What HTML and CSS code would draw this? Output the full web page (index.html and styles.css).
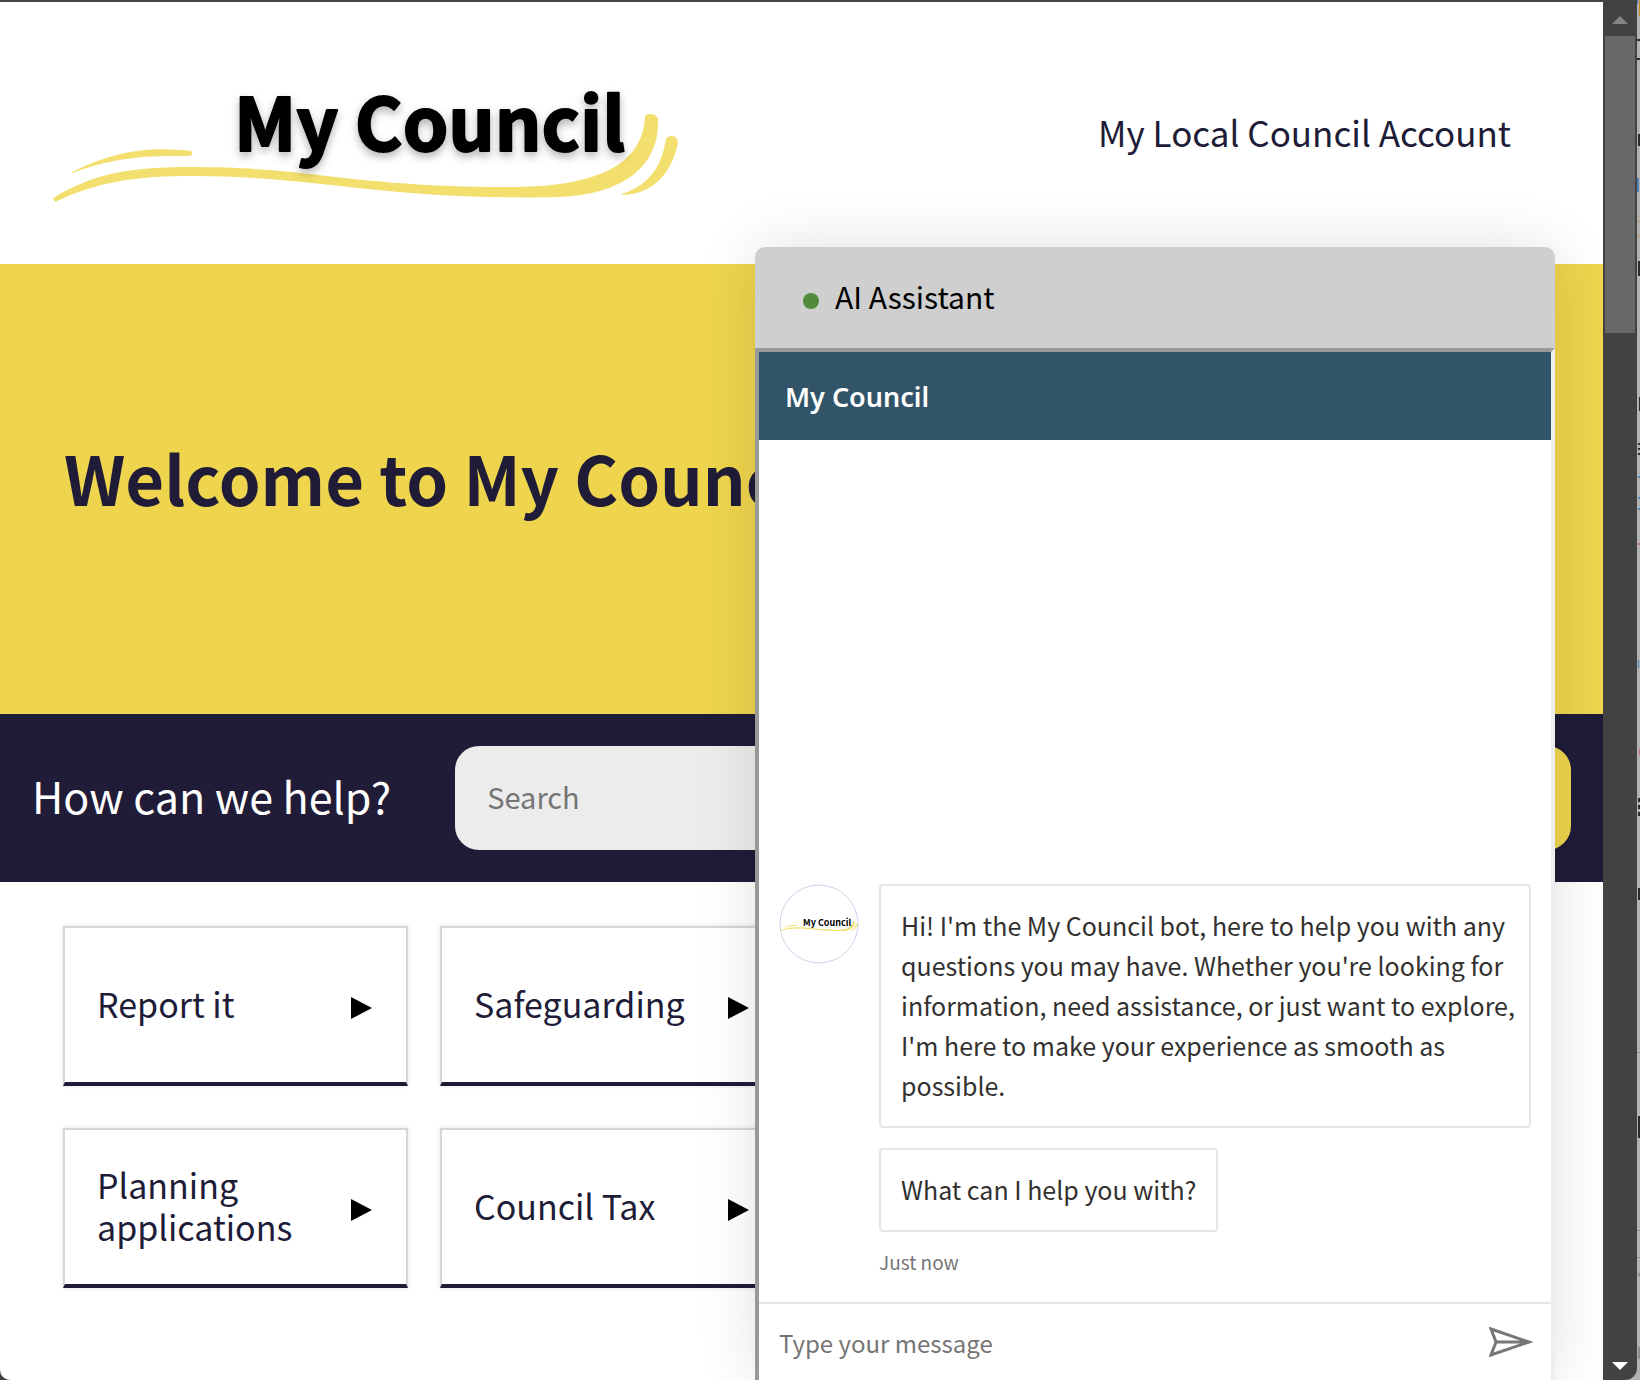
FILE: index.html
```html
<!DOCTYPE html>
<html lang="en">
<head>
<meta charset="utf-8">
<meta name="viewport" content="width=device-width, initial-scale=1">
<title>My Council</title>
<link rel="stylesheet" href="styles.css">
</head>
<body>
<div class="window">
  <div class="site">
    <header class="masthead">
      <a class="logo" href="#" aria-label="My Council home">
        <svg class="logo-art" viewBox="0 0 680 160">
          <defs>
            <g id="swoosh" fill="#f3df6d">
              <path d="M23 138C60 116 92 107 160 107C285 107 320 127 480 127C565 127 613 106 615 56C617 53 626 53 628 59C630 104 596 134 530 137C360 141 285 116 165 116C105 116 70 121 25 142Z"/>
              <path d="M42 112C90 88 128 87 161 91C164 95 161 96 157 96C125 96 90 95 42 113Z"/>
              <path d="M592 134C620 125 632 105 636 79C639 74 648 75 648 83C642 112 624 134 593 135Z"/>
            </g>
          </defs>
          <use href="#swoosh"/>
          <text class="logo-text" x="204" y="91">My Council</text>
        </svg>
      </a>
      <nav><a class="account-link" href="#">My Local Council Account</a></nav>
    </header>
    <section class="hero"><h1>Welcome to My Council</h1></section>
    <form class="search-bar">
      <label for="search">How can we help?</label>
      <input id="search" type="search" placeholder="Search">
      <button type="button" aria-label="Search"></button>
    </form>
    <main class="services">
      <a class="card" href="#"><span>Report it</span><svg class="arrow" viewBox="0 0 21 22"><path d="M0 0L21 11L0 22Z"/></svg></a>
      <a class="card" href="#"><span>Safeguarding</span><svg class="arrow" viewBox="0 0 21 22"><path d="M0 0L21 11L0 22Z"/></svg></a>
      <a class="card" href="#" aria-label="More services"></a>
      <a class="card" href="#" aria-label="More services"></a>
      <a class="card" href="#"><span>Planning applications</span><svg class="arrow" viewBox="0 0 21 22"><path d="M0 0L21 11L0 22Z"/></svg></a>
      <a class="card" href="#"><span>Council Tax</span><svg class="arrow" viewBox="0 0 21 22"><path d="M0 0L21 11L0 22Z"/></svg></a>
      <a class="card" href="#" aria-label="More services"></a>
      <a class="card" href="#" aria-label="More services"></a>
    </main>

    <aside class="chat">
      <div class="chat-title"><span class="status"></span><span class="chat-name">AI Assistant</span></div>
      <div class="chat-frame">
        <h2 class="chat-brand">My Council</h2>
        <div class="chat-log">
          <div class="turn">
            <svg class="avatar" viewBox="0 0 80 80">
              <circle cx="40" cy="40" r="39" fill="#fff" stroke="#ccd3ea"/>
              <use href="#swoosh" transform="translate(-2 30) scale(.124)"/>
              <text class="avatar-text" x="24" y="42">My Council</text>
            </svg>
            <div class="messages">
              <p class="bubble bubble-long">Hi! I'm the My Council bot, here to help you with any questions you may have. Whether you're looking for information, need assistance, or just want to explore, I'm here to make your experience as smooth as possible.</p>
              <p class="bubble">What can I help you with?</p>
              <time class="stamp">Just now</time>
            </div>
          </div>
        </div>
        <form class="composer">
          <input type="text" aria-label="Type your message" placeholder="Type your message">
          <button type="button" aria-label="Send">
            <svg viewBox="0 0 44 30"><path d="M2 2L40 15L2 28L7 15ZM7 15H40" fill="none" stroke="#767676" stroke-width="3"/></svg>
          </button>
        </form>
      </div>
    </aside>
  </div>
  <div class="scrollbar">
    <svg class="scroll-arrow" viewBox="0 0 16 8"><path d="M0 8L8 0L16 8Z" fill="#848484"/></svg>
    <div class="track"><div class="thumb"></div></div>
    <svg class="scroll-arrow" viewBox="0 0 16 8"><path d="M0 0H16L8 8Z" fill="#fff"/></svg>
  </div>
</div>
<svg class="behind" viewBox="0 0 3 1380" preserveAspectRatio="xMidYMin slice" aria-hidden="true">
  <path fill="#c48a22" d="M2 0h1v16h-1z"/>
  <path fill="#4d86b8" d="M0 0h1v4h-1zM0 178h2v14h-2zM1 476h2v2h-2zM1 497h2v2h-2zM1 508h2v2h-2zM1 660h1v8h-1z"/>
  <path fill="#c98a4a" d="M1 221h2v1h-2zM1 235h2v1h-2z"/>
  <path fill="#b5707c" d="M1 543h2v2h-2zM2 749h1v6h-1z"/>
  <path fill="#2b2b30" d="M0 39h3v2h-3zM0 58h3v2h-3zM1 134h2v12h-2zM1 261h2v15h-2zM2 397h1v14h-1zM1 443h2v2h-2zM1 448h2v2h-2zM1 453h2v2h-2zM1 798h2v4h-2zM1 805h2v4h-2zM1 812h2v4h-2zM1 888h2v12h-2zM1 1116h2v22h-2z"/>
  <path fill="#8c8c8c" d="M0 1052h3v1h-3zM0 1230h3v1h-3zM0 1257h3v1h-3zM1 1273h2v3h-2zM1 1347h2v12h-2z"/>
</svg>
</body>
</html>
```
FILE: styles.css
```css
* { box-sizing: border-box; }

body {
  display: flex;
  height: 100vh;
  margin: 0;
  background: #b2b2b2;
  color: #201c38;
  font-family: "Noto Sans CJK JP", "Noto Sans", sans-serif;
  overflow: hidden;
}

a { color: inherit; text-decoration: none; }
h1, h2, p { margin: 0; }
button { border: 0; padding: 0; background: none; }
input { border: 0; padding: 0; background: none; font: inherit; min-width: 0; outline: 0; }
input::placeholder { color: #757575; opacity: 1; }

.window {
  display: flex;
  flex: 1;
  min-width: 0;
  border-top: 2px solid #444;
  border-radius: 0 0 12px 0;
  background: #424242;
  overflow: hidden;
}
.behind { flex: none; width: 3px; height: 100%; }

.site {
  position: relative;
  flex: 1;
  min-width: 0;
  border-radius: 0 0 0 10px;
  background: #fff;
  overflow: hidden;
}

.masthead {
  display: flex;
  justify-content: space-between;
  align-items: center;
  height: 262px;
  padding: 0 92px 0 30px;
}
.masthead nav { padding-bottom: 3px; }
.logo-art { display: block; width: 680px; height: 160px; margin-top: 14px; overflow: visible; }
.logo-text {
  font-size: 73px;
  font-weight: 700;
  fill: #000;
  stroke: #000;
  stroke-width: 2px;
  stroke-linejoin: round;
  filter: drop-shadow(0 4px 4px rgba(0, 0, 0, .3));
}
.account-link { font-size: 35px; line-height: 44px; }

.hero {
  display: flex;
  align-items: center;
  height: 450px;
  padding: 0 64px 24px;
  background: #eed54d;
}
.hero h1 { font-size: 67px; line-height: 88px; white-space: nowrap; }

.search-bar {
  display: flex;
  align-items: center;
  gap: 32px;
  padding: 32px;
  background: #201c38;
}
.search-bar label { margin-right: 32px; color: #fff; font-size: 43px; line-height: 52px; padding-bottom: 6px; }
.search-bar input {
  flex: 1;
  height: 104px;
  padding: 0 32px 4px;
  border-radius: 24px;
  background: #ececec;
  font-size: 29px;
}
.search-bar button { width: 160px; height: 104px; border-radius: 24px; background: #eed54d; }

.services {
  display: grid;
  grid-template-columns: repeat(4, 1fr);
  gap: 42px 32px;
  padding: 44px 64px 44px 63px;
}
.card {
  display: flex;
  justify-content: space-between;
  align-items: center;
  height: 160px;
  padding: 0 34px 0 32px;
  border: 2px solid #d6d6da;
  border-bottom: 4px solid #201c38;
  box-shadow: 0 0 4px rgba(0, 0, 0, .12);
  font-size: 34px;
  line-height: 42px;
}
.card span { padding-bottom: 2px; }
.arrow { flex: none; width: 21px; height: 22px; margin-top: 6px; }

.chat {
  position: absolute;
  top: 245px;
  right: 48px;
  bottom: 0;
  display: flex;
  flex-direction: column;
  width: 800px;
  border-radius: 10px 10px 0 0;
  box-shadow: 0 0 60px rgba(0, 0, 0, .12);
}
.chat-title {
  display: flex;
  align-items: center;
  gap: 16px;
  height: 101px;
  padding: 6px 48px 0;
  border-radius: 10px 10px 0 0;
  background: #cfcfcf;
  color: #000;
  font-size: 30px;
  line-height: 40px;
}
.chat-name { padding-bottom: 10px; }
.status { width: 16px; height: 16px; border-radius: 50%; background: #4f8a3d; }
.chat-frame {
  flex: 1;
  display: flex;
  flex-direction: column;
  border: 4px solid #999;
  border-right-color: #eee;
  border-bottom: 0;
  background: #fff;
}
.chat-brand {
  height: 88px;
  padding: 0 26px;
  background: #315468;
  color: #fff;
  font-family: "Noto Sans", sans-serif;
  font-size: 27px;
  font-weight: 600;
  line-height: 90px;
}
.chat-log {
  flex: 1;
  display: flex;
  align-items: flex-end;
  padding: 0 20px 30px;
}
.turn {
  flex: 1;
  display: flex;
  justify-content: space-between;
  align-items: flex-start;
}
.avatar { width: 80px; height: 80px; }
.avatar-text {
  font-size: 9px;
  font-weight: 700;
  fill: #000;
}
.messages {
  display: flex;
  flex-direction: column;
  align-items: flex-start;
  gap: 20px;
  width: 652px;
  color: #323130;
}
.bubble {
  padding: 19px 20px 21px;
  border: 2px solid #e6e6e6;
  border-radius: 4px;
  font-size: 25px;
  line-height: 40px;
}
.bubble-long { padding-right: 8px; }
.stamp { color: #767676; font-size: 19px; line-height: 20px; }
.composer {
  display: flex;
  align-items: center;
  height: 78px;
  padding: 0 18px 0 20px;
  border-top: 2px solid #e6e6e6;
}
.composer input { flex: 1; font-size: 24px; }
.composer svg { display: block; width: 44px; height: 30px; }

.scrollbar {
  display: flex;
  flex-direction: column;
  align-items: center;
  width: 34px;
  padding: 14px 2px 10px;
}
.scroll-arrow { width: 16px; height: 8px; }
.track { flex: 1; width: 100%; padding-top: 12px; }
.thumb { width: 30px; height: 297px; background: #686868; }
```
